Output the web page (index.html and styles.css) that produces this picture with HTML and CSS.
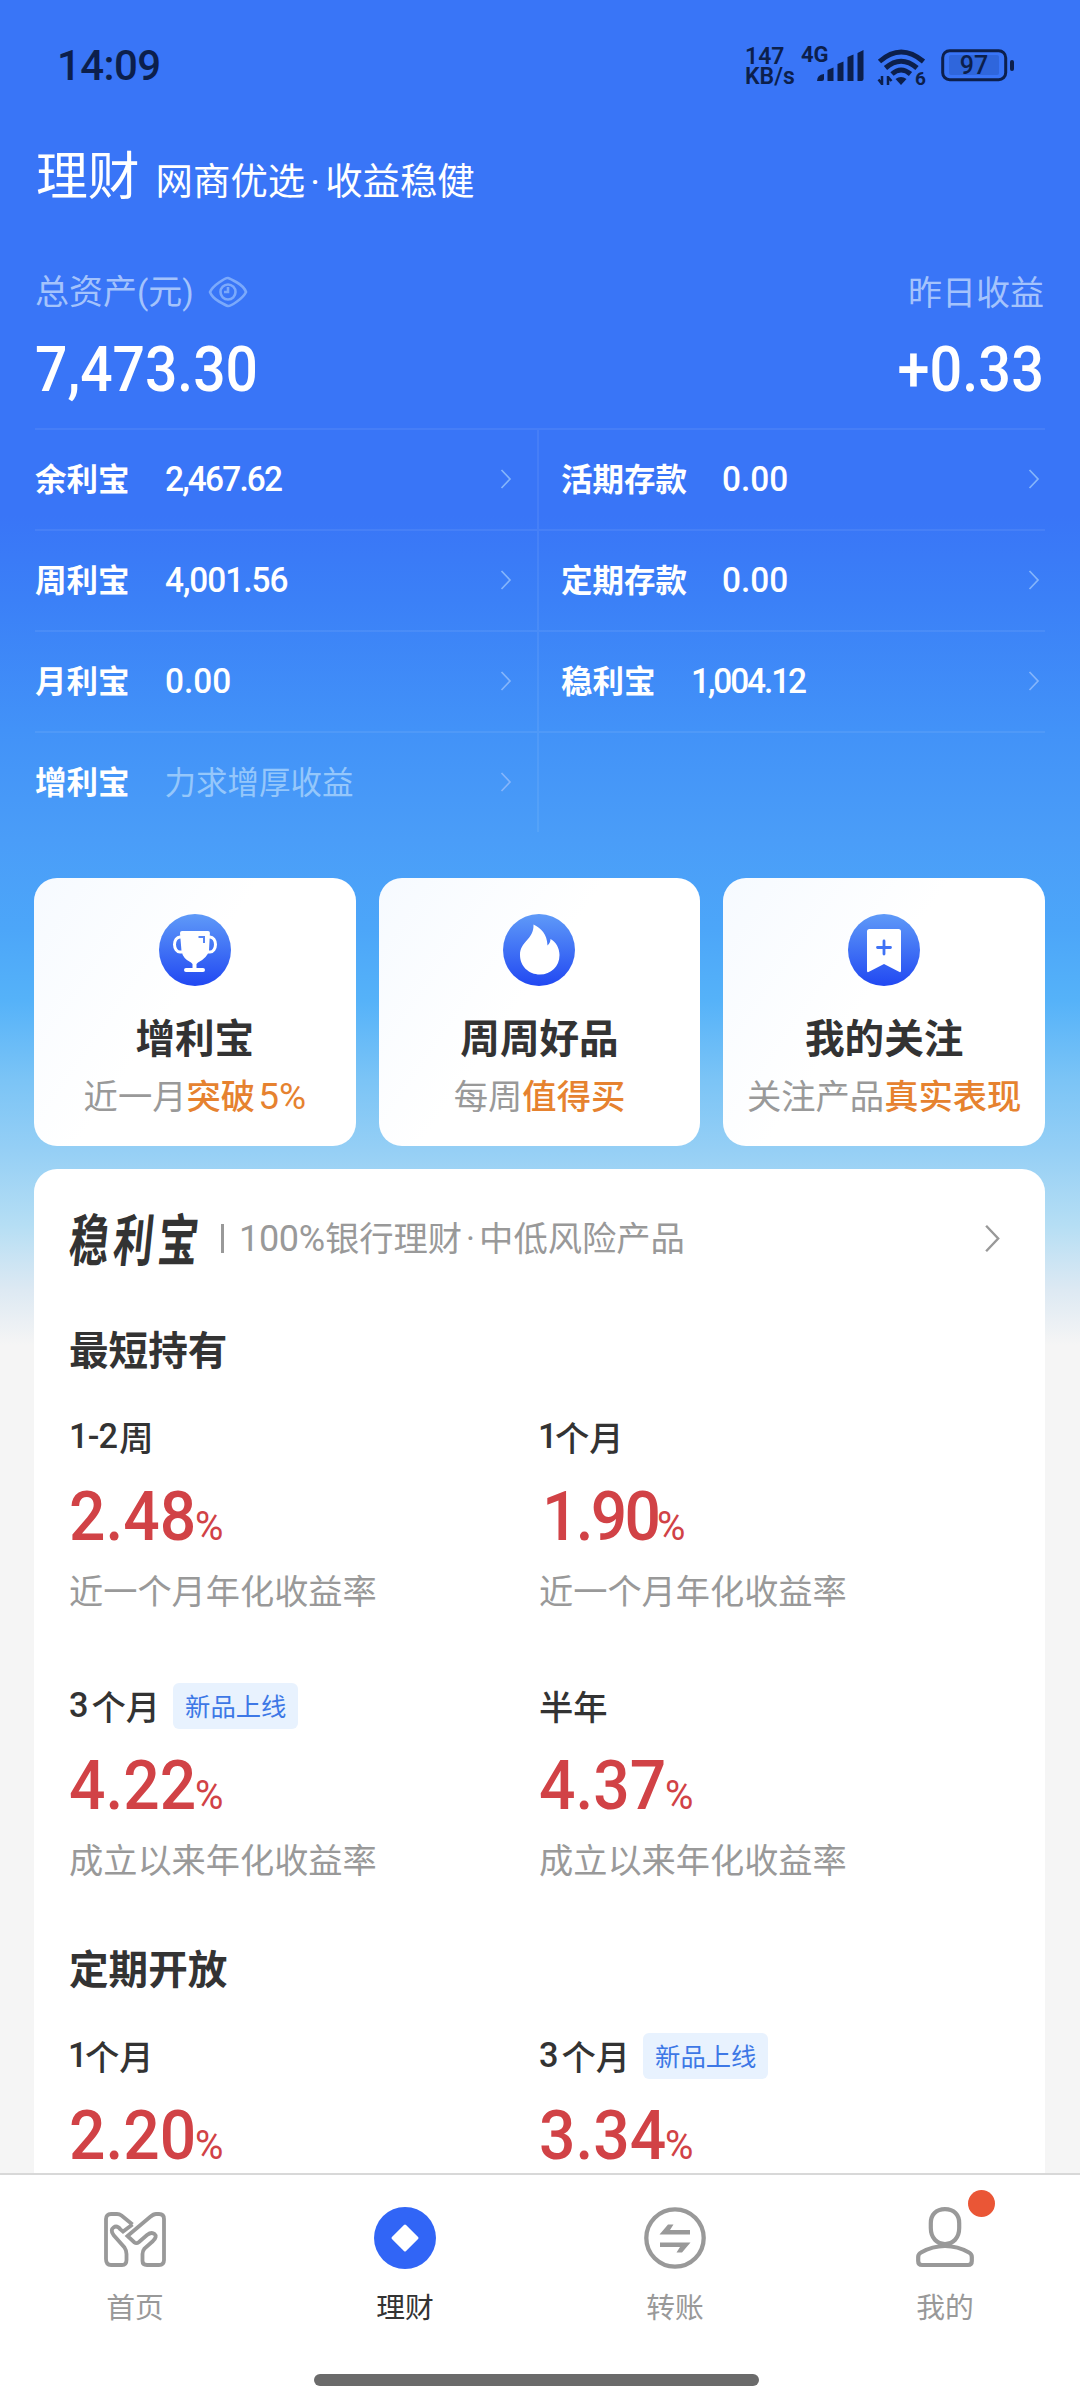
FILE: index.html
```html
<!DOCTYPE html>
<html lang="zh-CN">
<head>
<meta charset="utf-8">
<title>理财</title>
<link rel="stylesheet" href="styles.css">
</head>
<body>
<svg width="0" height="0" class="defs" aria-hidden="true">
  <defs>
    <linearGradient id="disc" x1="0" y1="0" x2="0" y2="1"><stop offset="0" stop-color="#5f9af8"/><stop offset="1" stop-color="#2148f2"/></linearGradient>
    <symbol id="chev" viewBox="0 0 12 20"><path d="M1.5 1 10 10 1.5 19" fill="none" stroke="currentColor" stroke-width="1.700"/></symbol>
  </defs>
</svg>
<div class="screen">
  <header class="status">
    <span class="time">14:09</span>
    <div class="status-right">
      <span class="speed">147<br>KB/s</span>
      <span class="net">4G</span>
      <svg class="signal" width="47" height="38" viewBox="17 0 47 38" fill="#0c1f4c"><path d="M17 35q0-6 7-7v5q0 2-2 2zM27.500 24l6-2.500V35h-6zM37.500 18l6-2.500V35h-6zM47.500 11l6-2.500V35h-6zM57.500 7l6-3V33q0 2-2 2h-4z"/></svg>
      <svg class="wifi" width="50" height="38" viewBox="0 0 50 38" fill="none" stroke="#0c1f4c" stroke-width="5"><path d="M2.500 13.500Q24 -5.500 46.500 13.500M8.500 20Q24 6.500 40 20M15 26Q24 18 33.500 26"/><path d="M18.500 31q5.500-4 11 0L24 37z" fill="#0c1f4c" stroke="none"/><path d="M5 37V28M1.500 31.500 5 36M11 28v9M11 29l3.500 4" stroke-width="2.500"/><text x="38" y="37" class="six">6</text></svg>
      <svg class="battery" width="74" height="33" viewBox="0 0 74 33"><rect x="1.700" y="1.700" width="63" height="29" rx="7" fill="none" stroke="#0c1f4c" stroke-width="3"/><rect x="8" y="6" width="50" height="20" rx="2" fill="#2f66dc"/><rect x="69" y="11" width="4" height="11" rx="2" fill="#0c1f4c"/><text x="33" y="25" class="level" text-anchor="middle">97</text></svg>
    </div>
  </header>

  <div class="title"><h1>理财</h1><span>网商优选<i>·</i>收益稳健</span></div>

  <section class="totals">
    <div>
      <div class="cap"><span>总资产<u>(</u>元<u>)</u></span><svg width="40" height="32" viewBox="0 0 40 32" fill="none" stroke="#7ba9fb" stroke-width="2.600"><path d="M2 16Q4 11.500 11 6.500T20 2t9 4.500T38 16Q36 20.500 29 25.500T20 30t-9-4.500T2 16z"/><circle cx="20" cy="16" r="7.500"/><path d="M20 11v5h-4"/></svg></div>
      <div class="sum">7,473.30</div>
    </div>
    <div class="right">
      <div class="cap"><span>昨日收益</span></div>
      <div class="sum">+0.33</div>
    </div>
  </section>

  <section class="accounts">
    <div class="acct"><b>余利宝</b><span class="amt k1">2,467.62</span><svg><use href="#chev"/></svg></div>
    <div class="acct"><b>活期存款</b><span class="amt">0.00</span><svg><use href="#chev"/></svg></div>
    <div class="acct"><b>周利宝</b><span class="amt k2">4,001.56</span><svg><use href="#chev"/></svg></div>
    <div class="acct"><b>定期存款</b><span class="amt">0.00</span><svg><use href="#chev"/></svg></div>
    <div class="acct"><b>月利宝</b><span class="amt">0.00</span><svg><use href="#chev"/></svg></div>
    <div class="acct"><b>稳利宝</b><span class="amt k3">1,004.12</span><svg><use href="#chev"/></svg></div>
    <div class="acct"><b>增利宝</b><span class="hint">力求增厚收益</span><svg><use href="#chev"/></svg></div>
    <div class="acct"></div>
  </section>

  <section class="cards">
    <div class="card">
      <svg width="72" height="72" viewBox="0 0 72 72"><circle cx="36" cy="36" r="36" fill="url(#disc)"/><path d="M24 17h25q2 0 1.900 2L50 37Q48 44 39 48.500L37.500 50V54H44q2 0 2 2t-2 2H27q-2 0-2-2t2-2h6.500V50L32 48.500Q24 45 22.500 37L21 19q0-2 2-2z" fill="#fff"/><path d="M22 23h-1a5.500 7.500 0 0 0 0 15h2.500M50 23h1a5.500 7.500 0 0 1 0 15h-2.500" fill="none" stroke="#fff" stroke-width="3"/><path d="M39.500 23H45v6" fill="none" stroke="#5585f6" stroke-width="2"/></svg>
      <h2>增利宝</h2><p>近一月<em>突破<span class="n">5%</span></em></p>
    </div>
    <div class="card">
      <svg width="72" height="72" viewBox="0 0 72 72"><circle cx="36" cy="36" r="36" fill="url(#disc)"/><path d="M30.500 10.500C38 14 44 20 44.500 31.500 46.500 29.500 47.500 27.500 47.500 25 53 28 56.500 34 56.500 41 56.500 52.500 48 60.500 37 60.500 25.500 60.500 17 52 17 41 17 27 31 26 30.500 10.500z" fill="#fff"/></svg>
      <h2>周周好品</h2><p>每周<em>值得买</em></p>
    </div>
    <div class="card">
      <svg width="72" height="72" viewBox="0 0 72 72"><circle cx="36" cy="36" r="36" fill="url(#disc)"/><path d="M21.500 15h29q2.500 0 2.500 2.500V57q0 1.500-1.500 1L36 50 20.500 58Q19 58.500 19 57V17.500Q19 15 21.500 15z" fill="#fff"/><path d="M36 27v13M29.500 33.500h13" stroke="#3f72f5" stroke-width="2.800" stroke-linecap="round"/></svg>
      <h2>我的关注</h2><p>关注产品<em>真实表现</em></p>
    </div>
  </section>

  <section class="panel">
    <div class="panel-head">
      <span class="brand">稳利宝</span><i class="bar"></i><span class="desc"><span class="pct">100%</span>银行理财<i>·</i>中低风险产品</span>
      <svg class="more"><use href="#chev"/></svg>
    </div>
    <h3>最短持有</h3>
    <div class="grid">
      <div class="item"><h4><span class="n n12">1-2</span>周</h4><div class="rate"><span>2.48</span><small>%</small></div><p>近一个月年化收益率</p></div>
      <div class="item"><h4><span class="n n1">1</span>个月</h4><div class="rate one"><span>1.90</span><small>%</small></div><p>近一个月年化收益率</p></div>
      <div class="item"><h4><span class="n n3">3</span>个月<span class="tag">新品上线</span></h4><div class="rate"><span>4.22</span><small>%</small></div><p>成立以来年化收益率</p></div>
      <div class="item"><h4>半年</h4><div class="rate"><span>4.37</span><small>%</small></div><p>成立以来年化收益率</p></div>
    </div>
    <h3>定期开放</h3>
    <div class="grid last">
      <div class="item"><h4><span class="n n1">1</span>个月</h4><div class="rate"><span>2.20</span><small>%</small></div></div>
      <div class="item"><h4><span class="n n3">3</span>个月<span class="tag">新品上线</span></h4><div class="rate"><span>3.34</span><small>%</small></div></div>
    </div>
  </section>

  <nav class="tabs">
    <a class="tab">
      <svg width="62" height="62" viewBox="0 0 62 62" fill="none" stroke="#999" stroke-width="3.800" stroke-linejoin="miter"><path d="M28.500 17.500 17.500 8.500Q15.500 7 13 7H7Q2 7 2 12V52Q2 58 7 58H18Q22.500 58 22.500 53V47Q22.500 43.500 20.500 40.500L9.500 28Q6 23 9.500 20.500T16.500 22.500L19 24.500 28.500 17.500"/><path d="M23.500 29 46 10Q49.500 7 52 7H55Q60 7 60 12V53Q60 58 55 58H43Q38.500 58 38.500 54V47Q38.500 44 40.500 41.500L49 34Q53.500 29.500 50.500 27T43 28L35 35Q32.500 37 30.500 35.500L23.500 29z"/></svg>
      <span>首页</span>
    </a>
    <a class="tab on">
      <svg width="62" height="62" viewBox="0 0 62 62"><circle cx="31" cy="31" r="31" fill="#3165f6"/><path d="M31 19 43 31 31 43 19 31z" fill="#fff" stroke="#fff" stroke-width="3" stroke-linejoin="round"/></svg>
      <span>理财</span>
    </a>
    <a class="tab">
      <svg width="62" height="62" viewBox="0 0 62 62"><circle cx="31" cy="31" r="28.700" fill="none" stroke="#999" stroke-width="4.300"/><path d="M15.500 27.500 24 17.500h5.500L26 23h20v4.500zM46.500 35.500 38 45.500h-5.500L36 40H16v-4.500z" fill="#999"/></svg>
      <span>转账</span>
    </a>
    <a class="tab">
      <svg width="62" height="62" viewBox="0 0 62 62" fill="none" stroke="#999" stroke-width="4.200" stroke-linejoin="round"><path d="M31 2.200C40 2.200 45.200 8 45.200 16V21C45.200 31 39 37 31 37S16.800 31 16.800 21V16C16.800 8 22 2.200 31 2.200z"/><path d="M31 39C22 39 14 41.500 7 45.500Q4.200 47 4.200 50V54Q4.200 58 8 58H54Q57.800 58 57.800 54V50Q57.800 47 55 45.500C48 41.500 40 39 31 39z"/></svg>
      <span>我的</span>
      <i class="dot"></i>
    </a>
    <div class="home"></div>
  </nav>
</div>
</body>
</html>
```
FILE: styles.css
```css
* { box-sizing: border-box; margin: 0; padding: 0; }
body { background: #f5f5f5; font-family: "Noto Sans CJK SC", sans-serif; color: #333; }
i, em { font-style: normal; }
.defs { display: block; position: absolute; }
.screen {
  width: 1080px; height: 2403px; overflow: hidden;
  display: flex; flex-direction: column;
  background: linear-gradient(#3975f7 0, #3975f7 515px, #3b80f7 600px, #4292f8 730px, #4a9df8 840px, #4ca6f9 930px, #55b2f9 1000px, #7bc4f6 1080px, #95cff5 1150px, #b5def4 1225px, #dde9f3 1290px, #f5f5f5 1345px);
}
.status { height: 130px; flex: none; padding: 44px 65px 0 57px; display: flex; justify-content: space-between; color: #0c1f4c; font-family: Roboto, sans-serif; }
.time { font-size: 42px; line-height: 44px; font-weight: 500; letter-spacing: -.6px; }
.status-right { display: flex; }
.speed { font-size: 23px; line-height: 20px; font-weight: 600; width: 56px; margin-top: 3px; white-space: nowrap; }
.net { font-size: 22px; line-height: 22px; font-weight: 700; width: 16px; white-space: nowrap; }
.signal { margin-top: 2px; }
.wifi { margin: 4px 0 0 13px; overflow: visible; }
.battery { margin: 5px 0 0 14px; }
.six { font: 700 19px Roboto, sans-serif; fill: #0c1f4c; stroke: none; }
.level { font: 500 25px Roboto, sans-serif; fill: #0c1f4c; }

.title { height: 128px; flex: none; padding: 11px 0 0 36px; display: flex; align-items: baseline; color: #fff; }
.title h1 { font-size: 51.8px; line-height: 64px; font-weight: 400; margin-right: 16px; }
.title span { font-size: 37.4px; font-weight: 400; }
.title i { display: inline-block; width: 20px; text-align: center; font-family: Roboto, sans-serif; }

.totals { height: 170px; flex: none; padding: 5px 36px 0 35px; display: flex; justify-content: space-between; }
.totals .right { text-align: right; }
.cap { height: 56px; line-height: 56px; font-size: 34px; color: #a4c3fc; display: flex; align-items: center; }
.cap u { text-decoration: none; font-family: Roboto, sans-serif; font-size: 33px; }
.right .cap { justify-content: flex-end; }
.cap svg { margin: 1px 0 0 14px; }
.sum { font: 500 63px/74px Roboto, sans-serif; color: #fff; margin-top: 14px; transform: scaleX(.905); transform-origin: 0 50%; }
.right .sum { transform: scaleX(.915); transform-origin: 100% 50%; }

.accounts { flex: none; margin: 0 35px; display: grid; grid-template-columns: 502px 508px; grid-auto-rows: 100.9px; }
.acct { display: flex; align-items: center; border-top: 2px solid rgba(255,255,255,.07); color: #fff; font-size: 31.5px; padding: 0 5px 0 0; }
.acct:nth-child(2n) { padding-left: 22px; border-left: 2px solid rgba(255,255,255,.07); }
.acct:nth-child(odd) { padding-right: 25px; }
.acct b { font-weight: 700; margin-right: 35px; padding-bottom: 4px; }
.acct svg { width: 12px; height: 20px; margin-left: auto; color: #85b5fb; }
.amt { font: 500 35px/44px Roboto, sans-serif; padding-top: 2px; transform: scaleX(.955); transform-origin: 0 50%; }
.k1 { letter-spacing: -1.9px; } .k2 { letter-spacing: -1.1px; } .k3 { letter-spacing: -2.2px; }
.hint { color: #95c7fb; padding-bottom: 4px; }

.cards { flex: none; margin: 46px 35px 0 34px; display: grid; grid-template-columns: repeat(3, 1fr); gap: 23px; }
.card { height: 268px; border-radius: 23px; background: linear-gradient(125deg, #f6faff, #fff 45%); display: flex; flex-direction: column; align-items: center; padding-top: 36px; white-space: nowrap; }
.card h2 { font-size: 39.6px; line-height: 56px; font-weight: 700; margin-top: 22px; }
.card p { font-size: 34.3px; line-height: 50px; color: #999; margin-top: 5px; }
.card em { color: #e6822f; font-weight: 500; }
.n { font-family: Roboto, sans-serif; }
.card .n { font-weight: 400; margin-left: 3px; font-size: 37px; line-height: 40px; }

.panel { flex: none; margin: 23px 35px 0 34px; height: 1004px; border-radius: 23px 23px 0 0; background: #fff; padding: 35px 35px 0; overflow: hidden; }
.panel-head { height: 70px; display: flex; align-items: center; color: #999; }
.brand { font-size: 50px; font-weight: 700; line-height: 70px; color: #333; width: 129px; white-space: nowrap; letter-spacing: 5.5px; padding-bottom: 3px; transform: skewX(-6deg) scale(.8, 1.12); transform-origin: 0 60%; }
.bar { width: 3px; height: 29px; background: #999; margin-left: 23px; }
.desc { font-size: 34.3px; line-height: 50px; margin-left: 15px; white-space: nowrap; padding-bottom: 2px; }
.desc i { display: inline-block; width: 17px; text-align: center; font-family: Roboto, sans-serif; }
.pct { font-family: Roboto, sans-serif; font-size: 36px; letter-spacing: -.3px; }
.more { width: 17px; height: 29px; margin-left: auto; margin-right: 9px; }
.panel h3 { font-size: 39.6px; font-weight: 700; line-height: 60px; }
.panel-head + h3 { margin-top: 44px; }
.grid + h3 { margin-top: 21px; }
.grid { display: grid; grid-template-columns: 470px 1fr; }
.item { height: 269px; padding-top: 33px; }
.last .item { height: 190px; }
.item h4 { font-size: 34.3px; font-weight: 500; line-height: 50px; height: 50px; display: flex; align-items: center; }
.n12 { letter-spacing: -.8px; margin-right: 2px; }
.n1 { width: 17px; margin-left: -1px; }
.n3 { margin-right: 3px; }
.tag { font-size: 25.3px; font-weight: 400; line-height: 44px; padding: 0 12px 2px; margin: 2px 0 0 13px; border-radius: 6px; background: #e8f2fe; color: #3d78e6; }
.rate { font: 500 69px/80px Roboto, sans-serif; color: #d14246; margin-top: 16px; display: flex; align-items: baseline; }
.rate span { width: 125px; transform: scaleX(.93); transform-origin: 0 50%; white-space: nowrap; }
.rate small { font-size: 40px; font-weight: 400; margin-left: 1px; transform: scaleX(1); transform: scaleX(.97); transform-origin: 0 50%; }
.rate.one span { width: 114px; margin-left: 3px; letter-spacing: -3px; }
.item p { font-size: 34.2px; line-height: 50px; color: #999; margin-top: -3px; }

.tabs { flex: none; height: 230px; background: #fff; border-top: 2px solid #d8d8d8; display: grid; grid-template-columns: repeat(4, 1fr); position: relative; }
.tab { position: relative; display: flex; flex-direction: column; align-items: center; padding-top: 32px; font-size: 28.8px; line-height: 44px; color: #999; }
.tab span { margin-top: 15px; }
.tab.on { color: #333; }
.dot { position: absolute; left: 158px; top: 15px; width: 27px; height: 27px; border-radius: 50%; background: #ea5636; }
.home { position: absolute; left: 314px; top: 199px; width: 445px; height: 12px; border-radius: 6px; background: #6b6b6b; }
```
